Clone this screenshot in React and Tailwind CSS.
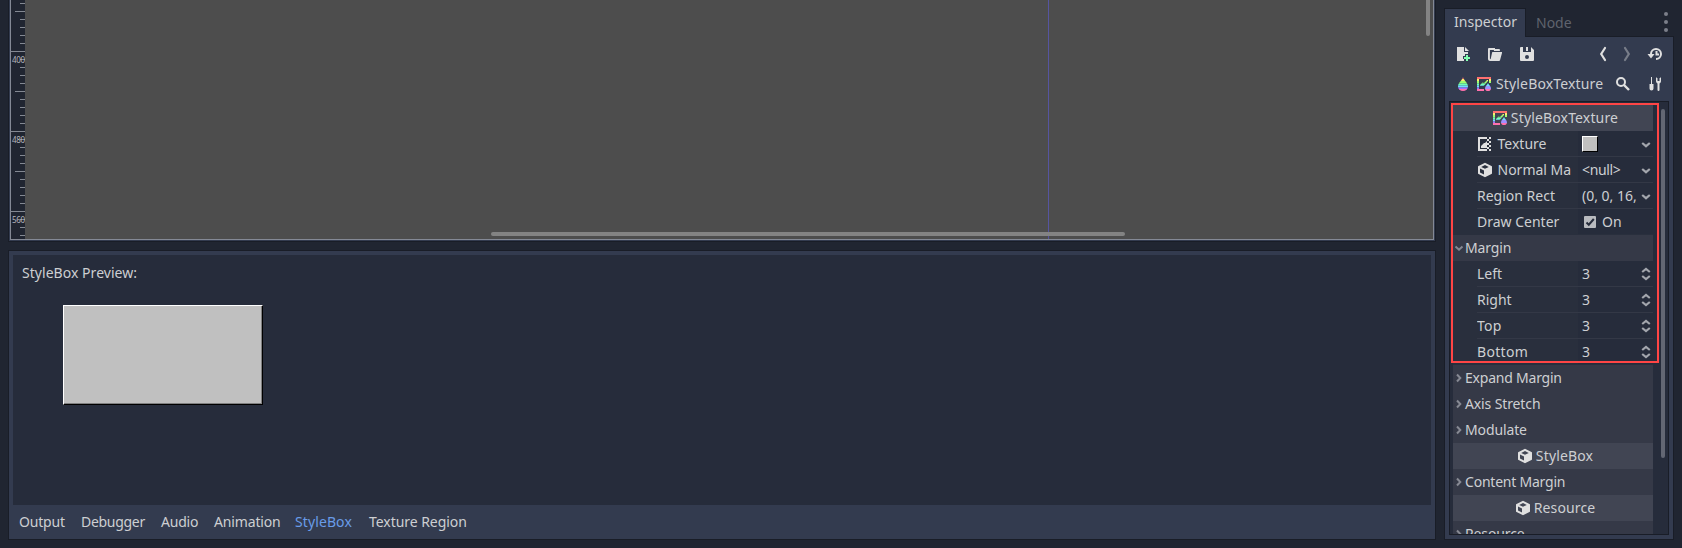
import React from "react";

const C = "#e0e0e0";

function Svg({ children, size = 16, className = "" }) {
  return (
    <svg width={size} height={size} viewBox="0 0 16 16" className={`shrink-0 ${className}`} fill="none">
      {children}
    </svg>
  );
}

const NewFile = () => (
  <Svg>
    <path d="M2 1v14h7v-2H8v-3h2V8h3V6H9V1zM10 1v4h4z" fill={C} />
    <path d="M11 9h2v2h2v2h-2v2h-2v-2H9v-2h2z" fill="#84ffb1" />
  </Svg>
);
const Folder = () => (
  <Svg>
    <path d="M2 2a1 1 0 0 0-1 1v10c0 1.200.9 2 2 2h9a1 1 0 0 0 1-.8L15 7V6H6c-.6 0-1 .4-1 1l-1.200 5.500c-.2 1-.9 1-.9 0V4h4v1h6V4c0-.600-.4-1-1-1H8V2z" fill={C} />
  </Svg>
);
const Save = () => (
  <Svg>
    <path fillRule="evenodd" d="M2 1a1 1 0 0 0-1 1v12a1 1 0 0 0 1 1h12a1 1 0 0 0 1-1V4l-3-3v5H4V1zm6 8a2 2 0 1 1 0 4 2 2 0 0 1 0-4z" fill={C} />
    <path d="M7 1h2v4H7z" fill={C} />
  </Svg>
);
const Back = () => (
  <Svg><path d="M10 2 6.200 8l3.800 6" stroke={C} strokeWidth="2.200" strokeLinecap="round" /></Svg>
);
const Forward = () => (
  <Svg className="opacity-40"><path d="M6 2 9.800 8 6 14" stroke={C} strokeWidth="2.200" strokeLinecap="round" /></Svg>
);
const History = () => (
  <Svg>
    <path d="M4 8a5 5 0 1 1 5 5M9.500 5v3.500H12" stroke={C} strokeWidth="2" />
    <path d="M0.500 8h7L4 12.500z" fill={C} />
  </Svg>
);
const Search = () => (
  <Svg>
    <circle cx="6" cy="6" r="4" stroke={C} strokeWidth="2" />
    <path d="m9 9 5 5" stroke={C} strokeWidth="2.400" />
  </Svg>
);
const Tools = () => (
  <Svg>
    <path d="M4 1h1v7h1.500v4.500a2 2 0 0 1-4 0V8H4zM9 1.200V5c0 1.200.700 2 1.500 2.500V14a1 1 0 0 0 2 0V7.500C13.500 7 14 6.200 14 5V1.200l-1.500 1V5h-2V2.200z" fill={C} />
  </Svg>
);
const Bands = () => (
  <>
    <path d="M0 0h16v3H0z" fill="#ff7070" />
    <path d="M0 3h16v2H0z" fill="#ffeb70" />
    <path d="M0 5h16v2.500H0z" fill="#9dff70" />
    <path d="M0 7.500h16v2H0z" fill="#70ffb9" />
    <path d="M0 9.500h16v2H0z" fill="#70deff" />
    <path d="M0 11.500h16v2H0z" fill="#9f70ff" />
    <path d="M0 13h16v3H0z" fill="#ff70ac" />
  </>
);
const Drop = () => (
  <Svg>
    <clipPath id="drop"><path d="M8 1C7 5 3 6.500 3 10.500a5 4.500 0 0 0 10 0C13 6.500 9 5 8 1z" /></clipPath>
    <g clipPath="url(#drop)"><Bands /></g>
  </Svg>
);
const StyleTex = ({ id }) => (
  <Svg>
    <clipPath id={id}>
      <path d="M1 1h14v6h-2V3H3v10h5v2H1zM4 9l2.500-2.500L8 7l3-3h1v1L9 8.500 7.500 10H4z" />
    </clipPath>
    <g clipPath={`url(#${id})`}><Bands /></g>
    <clipPath id={`${id}d`}><path d="M12 7c-.5 2-3 3-3 5.200a3 2.800 0 0 0 6 0C15 10 12.500 9 12 7z" /></clipPath>
    <g clipPath={`url(#${id}d)`}>
      <path d="M8 7h8v3H8z" fill="#70deff" />
      <path d="M8 10h8v3H8z" fill="#9f90ff" />
      <path d="M8 13h8v3H8z" fill="#ff70ac" />
    </g>
  </Svg>
);
const TextureIcon = () => (
  <Svg>
    <path d="M1 1h9v2H3v10h7v2H1zM4 12V10l3-3h1l2-2v7zM10 3h2v2h-2zM12 1h2v2h-2zM12 5h2v2h-2zM10 7h2v2h-2zM12 9h2v2h-2zM10 11h2v2h-2zM12 13h2v2h-2z" fill={C} />
  </Svg>
);
const Cube = () => (
  <Svg>
    <path fillRule="evenodd" d="M8 .8a1 1 0 0 0-.45.1l-6 3A1 1 0 0 0 1 4.800v6.400a1 1 0 0 0 .55.9l6 3a1 1 0 0 0 .9 0l6-3a1 1 0 0 0 .55-.9V4.800a1 1 0 0 0-.55-.9l-6-3A1 1 0 0 0 8 .8zM8 3l3.760 1.900L8 6.800 4.200 4.900zM3 6.600l4 2v3.800l-4-2z" fill={C} />
  </Svg>
);
const Chevron = ({ dir = "down" }) => (
  <svg width="10" height="10" viewBox="0 0 10 10" className="shrink-0" fill="none">
    <path d={dir === "down" ? "M1.500 3.500 5 6.700l3.500-3.200" : "M3 1.500 6.300 5 3 8.500"} stroke="#868993" strokeWidth="2" />
  </svg>
);
const DropArrow = () => (
  <svg width="10" height="10" viewBox="0 0 10 10" className="shrink-0" fill="none">
    <path d="M1.200 4 5 7.200l3.800-3.200" stroke="#a3a6ad" strokeWidth="2.200" />
  </svg>
);
const Spin = () => (
  <svg width="10" height="14" viewBox="0 0 10 14" className="shrink-0" fill="none">
    <path d="M1.200 5 5 2l3.800 3M1.200 9 5 12l3.800-3" stroke="#a3a6ad" strokeWidth="2.200" />
  </svg>
);

function Header({ icon, children }) {
  return (
    <div className="flex h-[26px] shrink-0 items-center justify-center gap-[3px] bg-[#414553] pl-1 tracking-[0.15px]">
      {icon}
      <span>{children}</span>
    </div>
  );
}

function Section({ open, children, tight }) {
  return (
    <div className="flex h-[26px] shrink-0 items-center bg-[#353947] pl-px">
      <Chevron dir={open ? "down" : "right"} />
      <span className={`ml-px ${tight ? "tracking-[-0.22px]" : "tracking-[-0.12px]"}`}>{children}</span>
    </div>
  );
}

function Row({ icon, label, children, arrow, last, labelClass = "" }) {
  return (
    <div className="flex h-[26px] shrink-0 bg-[#292f3d] pl-6">
      <div className={`flex min-w-0 flex-1 border-b ${last ? "border-transparent" : "border-[#333846]"}`}>
        <div className="flex w-[101px] shrink-0 items-center gap-[4.500px] overflow-hidden">
          {icon}
          <span className={labelClass}>{label}</span>
        </div>
        <div className="flex flex-1 items-center bg-[#262c3b] pl-1">
          <div className="flex flex-1 items-center">{children}</div>
          <div className="mr-[2px] flex">{arrow}</div>
        </div>
      </div>
    </div>
  );
}

const ticks = Array.from({ length: 30 }, (_, i) => i);

function Ruler() {
  return (
    <svg width="14" height="239" viewBox="0 0 14 239" className="shrink-0 bg-[#202531]">
      {ticks.map((i) => {
        const y = 3 + i * 8;
        const major = i % 10 === 6;
        const mid = i % 10 === 1;
        const x = major ? 0 : mid ? 4 : 9;
        return y < 239 ? <rect key={i} x={x} y={y} width={14 - x} height="1" fill="#848993" /> : null;
      })}
      {[[400, 63], [480, 143], [560, 223]].map(([n, y]) => (
        <text key={n} x="1" y={y} fontSize="8" textLength="13" fill="#b4b6bc" fontFamily="Noto Sans, sans-serif">{n}</text>
      ))}
    </svg>
  );
}

export default function App() {
  return (
    <div className="flex h-[548px] w-[1682px] overflow-hidden bg-[#202531] pl-2 font-['Noto_Sans',sans-serif] text-[14px] leading-[20px] whitespace-nowrap text-[#cdcfd2]">
      <div className="flex w-[1428px] shrink-0 flex-col">
        <div className="h-[242px] shrink-0 border border-t-0 border-[#191d27] bg-[#333b4f] px-px pb-px">
          <div className="flex h-[240px] border border-t-0 border-[#848995]">
            <Ruler />
            <div className="flex min-w-0 flex-1 flex-col bg-[#4d4d4d]">
              <div className="flex h-[232px]">
                <div className="w-[1024px] border-r border-[#5655a0]" />
                <div className="ml-auto mr-[3px] h-9 w-1 rounded-b-sm bg-[#838383]" />
              </div>
              <div className="flex h-[7px]">
                <div className="flex w-[1024px] border-r border-[#5655a0]">
                  <div className="ml-[466px] h-1 w-[634px] shrink-0 rounded-full bg-[#838383]" />
                </div>
              </div>
            </div>
          </div>
        </div>
        <div className="mt-2 flex h-[290px] shrink-0 flex-col border border-[#191d27] bg-[#333b4f] px-1 pt-1">
          <div className="h-[250px] bg-[#262c3b] pl-[9px] pt-2">
            <div className="tracking-[0.04px]">StyleBox Preview:</div>
            <div className="ml-[41px] mt-[22px] h-[100px] w-[200px] border border-t-white border-l-white border-r-black border-b-black bg-[#c0c0c0] shadow-[inset_-1px_-1px_0_#808080]" />
          </div>
          <div className="flex flex-1 items-center pl-[6px]">
            <span className="w-[62px] tracking-[-0.2px]">Output</span>
            <span className="w-[80px] tracking-[-0.3px]">Debugger</span>
            <span className="w-[53px] tracking-[-0.2px]">Audio</span>
            <span className="w-[81px] tracking-[-0.15px]">Animation</span>
            <span className="w-[74px] tracking-[0.1px] text-[#699ce8]">StyleBox</span>
            <span className="tracking-[-0.05px]">Texture Region</span>
          </div>
        </div>
      </div>

      <div className="ml-2 flex w-[230px] shrink-0 flex-col pt-2">
        <div className="z-10 -mb-px flex h-[29px] shrink-0">
          <div className="flex w-[82px] items-center justify-center border border-b-0 border-[#191d27] bg-[#333b4f] pb-[2px] pl-px tracking-[0.05px]">Inspector</div>
          <div className="ml-[10px] flex items-center text-[#5f636d]">Node</div>
          <div className="ml-auto mr-[6px] flex flex-col justify-center gap-1 pb-px">
            <i className="size-1 rounded-full bg-[#7b7f8a]" />
            <i className="size-1 rounded-full bg-[#7b7f8a]" />
            <i className="size-1 rounded-full bg-[#7b7f8a]" />
          </div>
        </div>
        <div className="h-[504px] shrink-0 border border-[#191d27] bg-[#333b4f] px-1">
          <div className="flex h-[34px] items-center pl-[6px] pr-[6px]">
            <NewFile />
            <div className="ml-4 flex"><Folder /></div>
            <div className="ml-4 flex"><Save /></div>
            <div className="ml-auto flex gap-2"><Back /><Forward /></div>
            <div className="ml-3 flex"><History /></div>
          </div>
          <div className="flex h-[30px] items-center pb-1 pl-[6px] pr-[6px]">
            <Drop />
            <div className="ml-[5px] mr-1 flex"><StyleTex id="st1" /></div>
            <span className="tracking-[0.15px]">StyleBoxTexture</span>
            <div className="ml-auto flex gap-4"><Search /><Tools /></div>
          </div>
          <div className="relative flex h-[434px] w-[220px] overflow-hidden border border-[#191d27] bg-[#262c3b] pl-[3px] pt-[3px]">
            <div className="flex w-[200px] shrink-0 flex-col">
              <Header icon={<StyleTex id="st2" />}>StyleBoxTexture</Header>
              <Row icon={<TextureIcon />} label="Texture" arrow={<DropArrow />}>
                <div className="size-4 border border-t-white border-l-white border-r-black border-b-black bg-[#c0c0c0]" />
              </Row>
              <Row icon={<Cube />} label="Normal Ma" arrow={<DropArrow />}>
                <span className="tracking-[-0.35px]">{"<null>"}</span>
              </Row>
              <Row label="Region Rect" arrow={<DropArrow />}>(0, 0, 16,</Row>
              <Row label="Draw Center" last>
                <svg width="12" height="12" viewBox="0 0 12 12" className="ml-[2px] mr-[6px]" fill="none">
                  <rect width="12" height="12" rx="1" fill="#b9bbbf" />
                  <path d="m2.500 6.500 2.300 2.200L9.800 3" stroke="#262c3b" strokeWidth="2" />
                </svg>
                On
              </Row>
              <Section open>Margin</Section>
              <Row label="Left" arrow={<Spin />}>3</Row>
              <Row label="Right" arrow={<Spin />}>3</Row>
              <Row label="Top" labelClass="tracking-[0.3px]" arrow={<Spin />}>3</Row>
              <Row label="Bottom" labelClass="tracking-[0.3px]" arrow={<Spin />} last>3</Row>
              <Section tight>Expand Margin</Section>
              <Section>Axis Stretch</Section>
              <Section>Modulate</Section>
              <Header icon={<Cube />}>StyleBox</Header>
              <Section tight>Content Margin</Section>
              <Header icon={<Cube />}>Resource</Header>
              <Section>Resource</Section>
            </div>
            <div className="ml-2 mt-1 h-[349px] w-1 rounded-full bg-[#636773]" />
            <div className="absolute left-px top-px h-[260px] w-[208px] border-2 border-[#ff4545]" />
          </div>
        </div>
      </div>
    </div>
  );
}
